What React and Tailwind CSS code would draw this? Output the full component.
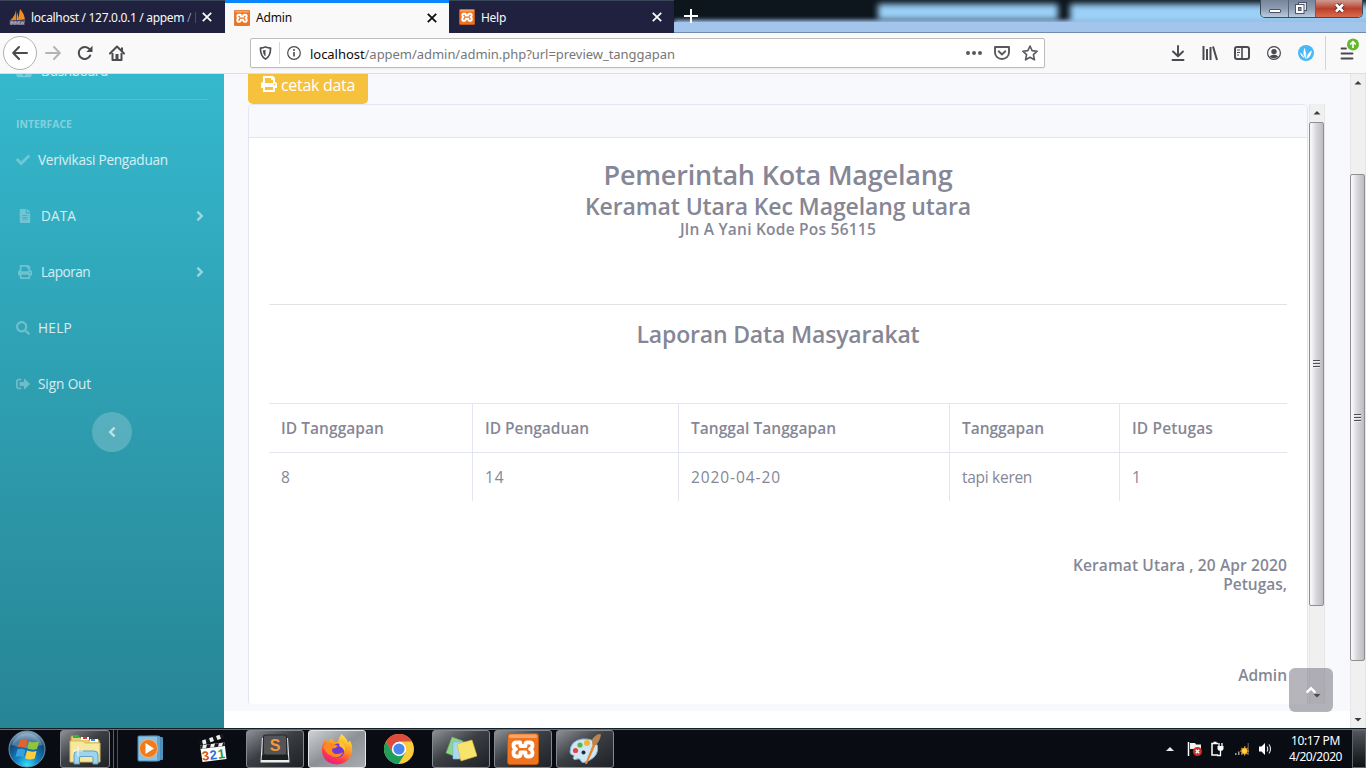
import { FaAngleLeft, FaAngleRight, FaAngleUp, FaCheck, FaFileAlt, FaPrint, FaSearch, FaSignOutAlt, FaTachometerAlt } from "react-icons/fa";

function XamppLogo({ className }) {
  return (
    <svg viewBox="0 0 32 32" className={className}>
      <rect x="0.5" y="0.5" width="31" height="31" rx="2.5" fill="#ee7420" stroke="#b85510" />
      <rect x="2" y="1.5" width="28" height="3.5" rx="1.5" fill="#f7a468" />
      <path
        d="M13 9.5H9.5Q6.5 9.5 6.5 12.2Q6.5 15 9 16Q6.5 17 6.5 19.8Q6.5 23.5 9.5 23.5H11.5Q13.5 23.5 13.5 20.5V19.5H18.5V20.5Q18.5 23.5 20.5 23.5H22.5Q25.5 23.5 25.5 19.8Q25.5 17 23 16Q25.5 15 25.5 12.2Q25.5 9.5 22.5 9.5H20.5Q18.5 9.5 18.5 11.5V13H13.5V11.5Q13.5 9.5 13 9.5Z"
        fill="none"
        stroke="#fff"
        strokeWidth="3.8"
        strokeLinejoin="round"
      />
    </svg>
  );
}

function PmaLogo() {
  return (
    <svg viewBox="0 0 17 16" className="h-4 w-[17px]">
      <path d="M7 0.500Q7 6 1 11.500L7.500 11Z" fill="#e88a1c" />
      <path d="M8 3L8 11L10 11Z" fill="#c9a27a" />
      <path d="M11 0Q10 6 9 11L16 10.500Q15 4 11 0Z" fill="#f08e1e" />
      <path d="M0.500 11.500H16.500L15 16H1Z" fill="#6b6986" />
      <path d="M2 15.500V13H4V15M6 15.500V12.500L8 14.500L10 12.500V15.500M12 15.500L13.500 13L15 15.500" stroke="#c9c7d6" strokeWidth="0.8" fill="none" />
    </svg>
  );
}

function Close({ className }) {
  return (
    <svg viewBox="0 0 10 10" className={className}>
      <path d="M0.800 0.800L9.200 9.200M9.200 0.800L0.800 9.200" stroke="currentColor" strokeWidth="1.800" fill="none" />
    </svg>
  );
}

function TitleBar() {
  return (
    <div className="relative flex h-[33px] shrink-0 overflow-hidden bg-[#0d151d] font-['Noto_Sans',sans-serif] text-[12px]">
      <div className="absolute left-[674px] top-[20px] h-[20px] w-[700px] bg-[#a3c5ec] blur-[2px]" />
      <div className="absolute left-[878px] top-[4px] h-[16px] w-[180px] bg-[#9bd0f7] blur-[3px]" />
      <div className="absolute left-[1070px] top-[4px] h-[20px] w-[320px] bg-[#9bd0f7] blur-[3px]" />
      <div className="absolute left-[674px] top-[22px] h-[10px] w-[692px] bg-[#a3c5ec]" />
      <div className="absolute left-[674px] top-[32px] h-px w-[692px] bg-[#6f8bb0]" />
      <div className="relative flex h-[33px] w-[225px] items-center border-t border-[#38475a] bg-[#20213f] pl-[9px] pr-[13px] text-[#f9f9fa]">
        <PmaLogo />
        <span className="ml-[5px] flex-1 whitespace-nowrap pt-px tracking-[-0.32px]">localhost / 127.0.0.1 / appem <span className="opacity-50">/</span></span>
        <span className="mr-[6px] h-[11px] w-px bg-[#4a4b63]" />
        <Close className="size-[10px]" />
      </div>
      <div className="relative flex h-[33px] w-[224px] items-center border-t-[3px] border-[#0a84ff] bg-[#f9f9fa] pl-[9px] pr-[12px] text-[#0c0c0d]">
        <XamppLogo className="-mt-px size-4" />
        <span className="ml-[6px] flex-1 whitespace-nowrap tracking-[-0.15px]">Admin</span>
        <Close className="size-[10px]" />
      </div>
      <div className="relative flex h-[33px] w-[225px] items-center border-t border-[#38475a] bg-[#20213f] pl-[10px] pr-[12px] text-[#f9f9fa]">
        <XamppLogo className="size-4" />
        <span className="ml-[6px] flex-1 whitespace-nowrap pt-px tracking-[-0.28px]">Help</span>
        <Close className="size-[10px]" />
      </div>
      <svg viewBox="0 0 14 14" className="relative ml-[10px] mt-[9px] size-[14px]">
        <path d="M7 0V14M0 7H14" stroke="#fff" strokeWidth="2" />
      </svg>
      <div className="absolute left-[1260px] top-0 flex h-[18px] w-[103px] overflow-hidden rounded-b-[5px] border border-t-0 border-[#3c4a5e]">
        <div className="flex w-[28px] items-end justify-center border-r border-[#55657c] bg-linear-to-b from-[#76859b] via-[#8e9db2] to-[#bccade] pb-[4px]">
          <div className="h-[4px] w-[12px] rounded-[1px] border border-[#4c5468] bg-white" />
        </div>
        <div className="flex w-[27px] items-center justify-center border-r border-[#55657c] bg-linear-to-b from-[#76859b] via-[#8e9db2] to-[#bccade]">
          <svg viewBox="0 0 12 12" className="-ml-[2px] -mt-px size-[12px]">
            <rect x="3.500" y="0.500" width="8" height="8" fill="#e8ecf2" stroke="#4c5468" />
            <rect x="0.500" y="2.500" width="8.500" height="9" fill="#fff" stroke="#4c5468" />
            <rect x="3.500" y="5.500" width="2.500" height="3" fill="#8b9ab0" stroke="#4c5468" />
          </svg>
        </div>
        <div className="flex flex-1 items-center justify-center bg-linear-to-b from-[#cf9a90] via-[#b7412b] to-[#dd6a4d]">
          <svg viewBox="0 0 13 10" className="-mt-px h-[10px] w-[13px]">
            <path d="M3 1.500L10 8.500M10 1.500L3 8.500" stroke="#53302f" strokeWidth="4.500" />
            <path d="M3 1.500L10 8.500M10 1.500L3 8.500" stroke="#fff" strokeWidth="2.600" />
          </svg>
        </div>
      </div>
    </div>
  );
}

function NavToolbar() {
  return (
    <div className="flex h-[41px] shrink-0 items-center border-b border-[#dedee0] bg-[#f9f9fa] text-[#4a4a4f]">
      <div className="ml-[3px] flex size-[34px] items-center justify-center rounded-full border border-[#b1b1b3] bg-white">
        <svg viewBox="0 0 16 16" className="size-4" fill="none" stroke="currentColor" strokeWidth="2" strokeLinecap="round" strokeLinejoin="round">
          <path d="M15 8H1.500M7 2L1.200 8L7 14" />
        </svg>
      </div>
      <svg viewBox="0 0 16 16" className="ml-[8px] size-4 text-[#b4b4b6]" fill="none" stroke="currentColor" strokeWidth="2" strokeLinecap="round" strokeLinejoin="round">
        <path d="M1 8H14.500M9 2L14.800 8L9 14" />
      </svg>
      <svg viewBox="0 0 16 16" className="ml-[16px] size-4" fill="none" stroke="currentColor" strokeWidth="2">
        <path d="M13.200 10.500A6 6 0 1 1 12.500 4.200" strokeLinecap="round" />
        <path d="M15.500 0.800V7H9.300Z" fill="currentColor" stroke="none" />
      </svg>
      <svg viewBox="0 0 16 16" className="ml-[16px] size-4">
        <path d="M1 8.500L8 1.500L15 8.500" fill="none" stroke="currentColor" strokeWidth="2" strokeLinecap="round" strokeLinejoin="round" />
        <path d="M12 2.500H14V6.500L12 4.500Z" fill="currentColor" />
        <path d="M3.500 8V15H12.500V8" fill="none" stroke="currentColor" strokeWidth="2" strokeLinejoin="round" />
        <rect x="6.500" y="9" width="3" height="6" fill="currentColor" />
      </svg>
      <div className="ml-[125px] flex h-[30px] w-[795px] items-center rounded-[2px] border border-[#bdbdbf] bg-white shadow-[0_1px_2px_rgba(0,0,0,0.06)]">
        <svg viewBox="0 0 14 16" className="ml-[8px] h-[14px] w-[13px]" fill="none">
          <path d="M7 1C5 2 3 2.400 1.200 2.400C1.200 8 2 12.500 7 15C12 12.500 12.800 8 12.800 2.400C11 2.400 9 2 7 1Z" stroke="currentColor" strokeWidth="1.900" strokeLinejoin="round" />
          <path d="M7 4.200V12C4.600 10.300 4.200 7.500 4.100 4.900C5.200 4.800 6.100 4.600 7 4.200Z" fill="currentColor" />
        </svg>
        <div className="ml-[7px] h-[22px] w-px bg-[#d7d7db]" />
        <svg viewBox="0 0 14 14" className="ml-[7px] size-[14px]">
          <circle cx="7" cy="7" r="6.300" fill="none" stroke="currentColor" strokeWidth="1.200" />
          <path d="M7 6V10.500" stroke="currentColor" strokeWidth="1.600" />
          <circle cx="7" cy="3.900" r="1" fill="currentColor" />
        </svg>
        <div className="ml-[9px] flex-1 whitespace-nowrap pt-[3px] font-['Noto_Sans',sans-serif] text-[13px] tracking-[-0.04px] text-[#77777a]">
          <span className="text-[#0c0c0d]">localhost</span>/appem/admin/admin.php?url=preview_tanggapan
        </div>
        <svg viewBox="0 0 16 4" className="h-[4px] w-[16px]" fill="#5a5a5e">
          <circle cx="2" cy="2" r="2" /><circle cx="8" cy="2" r="2" /><circle cx="14" cy="2" r="2" />
        </svg>
        <svg viewBox="0 0 16 16" className="ml-[12px] size-4" fill="none" stroke="#5a5a5e" strokeWidth="1.900" strokeLinecap="round" strokeLinejoin="round">
          <path d="M1 2H15V7.500A7 6.500 0 0 1 1 7.500ZM4.700 6.300L8 9.500L11.300 6.300" />
        </svg>
        <svg viewBox="0 0 16 16" className="ml-[12px] mr-[6px] size-4" fill="none" stroke="#5a5a5e" strokeWidth="1.600" strokeLinejoin="round">
          <path d="M8 1L10.100 5.600L15.200 6.200L11.400 9.600L12.500 14.800L8 12.200L3.500 14.800L4.600 9.600L0.800 6.200L5.900 5.600Z" />
        </svg>
      </div>
      <svg viewBox="0 0 14 16" className="ml-[126px] h-4 w-[14px]" fill="none" stroke="currentColor" strokeWidth="1.900" strokeLinecap="round" strokeLinejoin="round">
        <path d="M7 1V11M2 6.500L7 11.300L12 6.500M1.500 15H12.500" />
      </svg>
      <svg viewBox="0 0 16 16" className="ml-[17px] size-4" fill="none" stroke="currentColor" strokeWidth="2">
        <path d="M1.500 1V15M5 4V15M8.500 2V15M11 1.500L15 15" />
      </svg>
      <svg viewBox="0 0 16 14" className="ml-[16px] h-[14px] w-4" fill="none" stroke="currentColor">
        <rect x="1" y="1" width="14" height="12" rx="2" strokeWidth="2" />
        <path d="M8 1V13" strokeWidth="1.600" />
        <path d="M3 4H6M3 6.500H6M3 9H5" strokeWidth="1" />
      </svg>
      <svg viewBox="0 0 14 14" className="ml-[17px] size-[14px]">
        <circle cx="7" cy="7" r="6.400" fill="none" stroke="currentColor" strokeWidth="1.200" />
        <circle cx="7" cy="5.600" r="2.700" fill="currentColor" />
        <path d="M2.800 10.500Q4.500 8.400 7 8.800Q9.500 8.400 11.200 10.500Q9.500 12.300 7 12.300Q4.500 12.300 2.800 10.500Z" fill="currentColor" />
      </svg>
      <svg viewBox="0 0 16 16" className="ml-[17px] size-4">
        <circle cx="8" cy="8" r="8" fill="#48b9f5" />
        <path d="M2.500 8Q5 9.500 5.800 12.500Q3.500 11.500 2.500 8ZM6.500 3.500Q8.500 8 7.600 13.500Q4.500 9 6.500 3.500ZM13.500 6Q13 11.500 8.800 13.500Q9 9 13.500 6Z" fill="#fff" stroke="#fff" strokeWidth="0.600" />
      </svg>
      <div className="ml-[11px] h-[34px] w-px bg-[#d4d4d7]" />
      <svg viewBox="0 0 20 24" className="ml-[14px] mt-[-8px] h-[24px] w-[20px]">
        <path d="M1.500 11.500H6M1.500 16.500H12.500M1.500 21.500H12.500" stroke="#4a4a4f" strokeWidth="1.800" strokeLinecap="round" />
        <circle cx="13" cy="7.500" r="6" fill="#65b82e" />
        <path d="M13 11V5M10.200 7.500L13 4.700L15.800 7.500" stroke="#fff" strokeWidth="1.600" fill="none" />
      </svg>
    </div>
  );
}

function ScrollArrow({ up }) {
  return (
    <svg viewBox="0 0 16 17" className="block h-[17px] w-4 shrink-0">
      <path d={up ? "M4.500 10.500L8 7L11.500 10.500Z" : "M4.500 7L8 10.500L11.500 7Z"} fill="#3c3c3f" />
    </svg>
  );
}

function Scrollbar({ before, thumb }) {
  return (
    <div className="flex h-full w-4 shrink-0 flex-col border-x border-[#e6e6e8] bg-[#f0f0f0]">
      <div className="-mx-px"><ScrollArrow up /></div>
      <div className={before} />
      <div className={"-ml-px flex flex-col items-center justify-center gap-px rounded-[2px] border border-[#8f8f92] bg-linear-to-r from-[#f6f6f7] from-10% via-[#d6d6da] via-50% to-[#bcbcc3] pr-px " + thumb}>
        {[0, 1, 2].map((i) => (
          <div key={i} className="h-[2px] w-[7px] border-t border-[#4d4d52] bg-[#ececee]" />
        ))}
      </div>
      <div className="flex-1" />
      <div className="-mx-px"><ScrollArrow /></div>
    </div>
  );
}

const links = [
  { icon: FaCheck, label: "Verivikasi Pengaduan", text: "ml-[8px] tracking-[-0.24px]", row: "" },
  { icon: FaFileAlt, label: "DATA", text: "ml-[9px] tracking-[0.1px]", row: "pl-[2px]", more: true },
  { icon: FaPrint, label: "Laporan", text: "ml-[9px] tracking-[-0.5px]", row: "pl-[2px]", more: true },
  { icon: FaSearch, label: "HELP", text: "ml-[8px] tracking-[0.28px]", row: "" },
  { icon: FaSignOutAlt, label: "Sign Out", text: "ml-[8px] tracking-[-0.1px]", row: "" },
];

function Sidebar() {
  return (
    <div className="flex w-[224px] shrink-0 flex-col overflow-hidden bg-linear-to-b from-[#35b8cd] to-[#278595] px-4 text-[13.6px] text-white/80">
      <div className="flex h-[26px] shrink-0 items-start border-b border-white/15">
        <div className="-mt-[13px] flex h-5 items-center">
          <FaTachometerAlt className="size-[16px] text-white/30" />
          <span className="ml-[9px] tracking-[-0.35px]">Dashboard</span>
        </div>
      </div>
      <div className="mt-[16px] h-4 text-[10.4px] font-bold leading-4 text-white/40">INTERFACE</div>
      <div className="flex flex-col">
        {links.map(({ icon: Icon, label, text, row, more }) => (
          <div key={label} className={"flex h-[56px] items-center " + row}>
            <Icon className="size-[14px] text-white/30" />
            <span className={text}>{label}</span>
            {more && <FaAngleRight className="ml-auto size-4 text-white/50" />}
          </div>
        ))}
      </div>
      <div className="mx-auto flex size-10 shrink-0 items-center justify-center rounded-full bg-white/20 pr-px">
        <FaAngleLeft className="size-4 text-white/60" />
      </div>
    </div>
  );
}

const columns = [
  { head: "ID Tanggapan", value: "8", size: "w-[204px] border-r", headText: "tracking-[0.05px]", valueText: "" },
  { head: "ID Pengaduan", value: "14", size: "w-[206px] border-r", headText: "tracking-[-0.03px]", valueText: "tracking-[0.8px]" },
  { head: "Tanggal Tanggapan", value: "2020-04-20", size: "w-[271px] border-r", headText: "tracking-[0.04px]", valueText: "tracking-[0.91px]" },
  { head: "Tanggapan", value: "tapi keren", size: "w-[170px] border-r", headText: "tracking-[-0.03px]", valueText: "tracking-[-0.29px]" },
  { head: "ID Petugas", value: "1", size: "w-[167px]", headText: "tracking-[0.13px]", valueText: "" },
];

function Report() {
  return (
    <div className="flex w-[1060px] flex-col rounded-t-[5px] rounded-bl-[3px] border border-b-0 border-[#e3e6f0] bg-white text-[15.5px] text-[#858796]">
      <div className="h-[33px] shrink-0 rounded-t-[5px] border-b border-[#e3e6f0] bg-[#f8f9fc]" />
      <div className="flex flex-col px-5 pt-5">
        <div className="flex flex-col items-center font-semibold">
          <h3 className="h-[34px] text-[27px] leading-[33px] tracking-[-0.2px]">Pemerintah Kota Magelang</h3>
          <h4 className="h-[28px] text-[23px] leading-[28px] tracking-[-0.11px]">Keramat Utara Kec Magelang utara</h4>
          <p className="h-[20px] leading-[19px] tracking-[0.23px]">Jln A Yani Kode Pos 56115</p>
        </div>
        <div className="mt-[64px] h-px bg-[#e2e2e6]" />
        <h4 className="mt-[15px] mb-px text-center text-[23px] font-semibold leading-[29px] tracking-[-0.17px]">Laporan Data Masyarakat</h4>
        <div className="mt-[53px] flex">
          {columns.map((c) => (
            <div key={c.head} className={"border-[#e3e6f0] " + c.size}>
              <div className={"h-[49px] border-t border-[#e3e6f0] px-3 font-semibold leading-[48px] " + c.headText}>{c.head}</div>
              <div className={"h-[49px] border-t border-[#e3e6f0] px-3 leading-[48px] " + c.valueText}>{c.value}</div>
            </div>
          ))}
        </div>
        <div className="mt-[55px] text-right font-semibold">
          <p className="leading-[19px] tracking-[0.12px]">Keramat Utara , 20 Apr 2020</p>
          <p className="leading-[19px]">Petugas,</p>
          <p className="mt-[72px] leading-[19px]">Admin</p>
        </div>
      </div>
    </div>
  );
}

function Main() {
  return (
    <div className="relative flex flex-1 flex-col bg-white">
      <div className="flex h-[637px] shrink-0 flex-col bg-[#f8f9fc] pl-6">
        <div className="flex h-[30px] w-[120px] items-start rounded-b-[5px] bg-[#f6c23e] pl-[13px] text-[16px] text-white">
          <FaPrint className="mt-[2px] size-4" />
          <span className="ml-[4px] h-[22px] leading-[22px] tracking-[-0.3px]">cetak data</span>
        </div>
        <div className="flex h-[600px] w-[1077px]">
          <Report />
          <div className="w-px" />
          <Scrollbar before="h-px" thumb="h-[484px]" />
        </div>
      </div>
      <div className="absolute left-[1065px] top-[594px] flex size-[44px] items-center justify-center rounded-[6px] bg-[#5a5c69]/45 text-white">
        <FaAngleUp className="size-4" />
      </div>
    </div>
  );
}

function TaskButton({ active, className, children }) {
  return (
    <div className={"flex h-[38px] items-center justify-center rounded-[3px] border " + (active ? "border-[#e4e6e8] bg-linear-to-br from-[#cfd1d4] via-[#8d9195] to-[#a9acae] " : "border-[#84898f] bg-linear-to-br from-[#8d9094] via-[#3b3f44] via-45% to-[#1e2226] ") + className}>
      {children}
    </div>
  );
}

function StartOrb() {
  return (
    <svg viewBox="0 0 38 38" className="ml-[8px] size-[38px]">
      <defs>
        <radialGradient id="orb" cx="0.500" cy="0.950" r="0.900">
          <stop offset="0" stopColor="#33e1ff" />
          <stop offset="0.350" stopColor="#1283c4" />
          <stop offset="0.750" stopColor="#134a7c" />
          <stop offset="1" stopColor="#7fa3bb" />
        </radialGradient>
      </defs>
      <circle cx="19" cy="19" r="18" fill="url(#orb)" stroke="#6e92a8" />
      <path d="M4 15A15.500 15.500 0 0 1 34 15Q19 21 4 15Z" fill="#fff" opacity="0.250" />
      <path d="M12 10.500Q15.500 8.500 19.500 10.500L17.800 18Q14 16 9.800 17.500Z" fill="#e8602a" />
      <path d="M21 11.200Q25 13.200 31 11.500L29 19Q24 20.500 19.300 18.500Z" fill="#8cc63e" />
      <path d="M9.300 19.500Q13.500 18 17.300 20L15.500 27.500Q11.500 25.500 7.500 27Z" fill="#39a0e0" />
      <path d="M19 20.500Q23.500 22.500 28.500 21L26.800 28.500Q21.500 30.500 17 28.200Z" fill="#fbcf3b" />
    </svg>
  );
}

function ExplorerIcon() {
  return (
    <svg viewBox="0 0 34 32" className="h-8 w-[34px]">
      <path d="M3 6V3H10L12 5H20V7H31V28H3Z" fill="#e9cf72" stroke="#b99a3f" />
      <rect x="5" y="2" width="6" height="3" fill="#36b24a" />
      <rect x="13" y="4" width="8" height="3" fill="#fff" /><rect x="15" y="4" width="4" height="2" fill="#d8382c" />
      <rect x="22" y="6" width="8" height="3" fill="#fff" /><rect x="23" y="6" width="4" height="2" fill="#3b8de0" />
      <path d="M2 8H15L17 10H32V29H2Z" fill="#f7e8a0" stroke="#d5b95c" />
      <path d="M6 31V22Q6 18 10 18H26Q30 18 30 22V31H25V25Q25 23.500 23.500 23.500H13Q11.500 23.500 11.500 25V31Z" fill="#9fd4ee" stroke="#5f9fc4" />
      <path d="M10 13V23M5 18H15" stroke="#fff" strokeWidth="0.900" />
    </svg>
  );
}

function MediaIcon() {
  return (
    <svg viewBox="0 0 27 27" className="size-[27px]">
      <rect x="12" y="2" width="14" height="23" rx="1" fill="#4f93bd" />
      <rect x="10" y="1" width="13" height="25" rx="1" fill="#7ab8d8" stroke="#3f7fa8" strokeWidth="0.600" />
      <rect x="1" y="1" width="20" height="25" rx="1" fill="#8cc3e0" stroke="#4a8bb3" />
      <circle cx="11.500" cy="13.500" r="9" fill="#f07a1c" stroke="#f9b274" />
      <path d="M8.500 8L17 13.500L8.500 19Z" fill="#fff" />
    </svg>
  );
}

function ClapperIcon() {
  return (
    <svg viewBox="0 0 30 30" className="size-[30px]">
      <path d="M1 8.500L25 0.500L26.500 4.500L2.500 12.500Z" fill="#16181b" />
      <path d="M4 7.500L7.500 6.300L8.500 10.500L5 11.700ZM11 5.200L14.500 4L16 8L12.500 9.200ZM18 2.900L21.500 1.700L23 5.700L19.500 6.900Z" fill="#f0f0f0" />
      <path d="M2 12.500L26.500 9.500L28.500 26L4.500 29Z" fill="#fff" />
      <path d="M2 12.500L26.500 9.500L27 13L2.500 16Z" fill="#1b1c1f" />
      <path d="M5 12.100L9 11.600L8 15.300L4 15.800ZM13 11.100L17 10.600L16 14.300L12 14.800ZM21 10.200L25 9.700L24 13.300L20 13.800Z" fill="#f0f0f0" />
      <g fontFamily="Liberation Sans" fontWeight="bold" fontSize="13" transform="rotate(-7 15 24)">
        <text x="4" y="26.500" fill="#d4531d">3</text><text x="12" y="26.500" fill="#2b6fd4">2</text><text x="20" y="26.500" fill="#2a9a3a">1</text>
      </g>
    </svg>
  );
}

function SublimeIcon() {
  return (
    <svg viewBox="0 0 32 30" className="h-[30px] w-8">
      <path d="M3 4H29L30.500 28.500H1.500Z" fill="#eceded" />
      <path d="M4 2Q4 1 5 1H27Q28 1 28 2L29 25H3Z" fill="#303234" />
      <rect x="4.500" y="1" width="23" height="20" rx="2" fill="#525457" stroke="#252729" />
      <path d="M3 21H29L29.500 26H2.500Z" fill="#1d1e20" />
      <text x="16" y="17" textAnchor="middle" fontFamily="Liberation Sans" fontWeight="bold" fontSize="16" fill="#f6983a">S</text>
    </svg>
  );
}

function FirefoxIcon() {
  return (
    <svg viewBox="0 0 32 32" className="size-8">
      <defs>
        <linearGradient id="fox" x1="0.800" y1="0" x2="0.300" y2="1">
          <stop offset="0" stopColor="#fff04a" /><stop offset="0.450" stopColor="#ff9420" /><stop offset="0.750" stopColor="#ff3a4c" /><stop offset="1" stopColor="#e8198b" />
        </linearGradient>
      </defs>
      <path d="M20.500 1Q26 5.500 27 9.500L29 7.500Q32 13 31 19Q28 31 16 31.500Q3 31 1 19Q0.500 11 4.500 5.500Q5 8 6.500 9Q9 5.500 11.500 5.500Q11.500 8 13 9H17Q18 4 20.500 1Z" fill="url(#fox)" />
      <circle cx="16.500" cy="17.500" r="7" fill="#7138d8" />
      <path d="M2 14Q7 8 13 11L17 13Q15 15.500 11.500 15.500Q10 18 13 20.500Q18 22 22 19Q20 25 14 24Q6 23 2 14Z" fill="#ff8a1e" />
      <path d="M18 8Q26 12 23.500 19Q22 14 18.500 13.500Z" fill="#ffc52e" />
    </svg>
  );
}

function ChromeIcon() {
  return (
    <svg viewBox="0 0 30 30" className="size-[30px]">
      <circle cx="15" cy="15" r="15" fill="#fbcd3c" />
      <path d="M2 7.500A15 15 0 0 0 14.500 30L21.500 18.500L15 15L8.500 18.500Z" fill="#1d9e5b" />
      <path d="M2 7.500A15 15 0 0 1 28 7.500H15L8.500 18.500Z" fill="#dd4b3e" />
      <circle cx="15" cy="15" r="7.200" fill="#fff" />
      <circle cx="15" cy="15" r="5.600" fill="#4a86ee" />
    </svg>
  );
}

function NotesIcon() {
  return (
    <svg viewBox="0 0 32 26" className="h-[26px] w-8">
      <path d="M7 1L18 5L12 21L1 17Z" fill="#8fd48a" stroke="#6aae66" strokeWidth="0.600" />
      <path d="M8 6H20V23H8Z" fill="#a9d8f5" stroke="#7ab1d3" strokeWidth="0.600" />
      <path d="M12 8L27 4L32 20L16 25Z" fill="#f8e36c" stroke="#d5b83c" strokeWidth="0.600" />
    </svg>
  );
}

function PaintIcon() {
  return (
    <svg viewBox="0 0 32 32" className="size-8">
      <path d="M1 19Q1 8 13 6Q26 5 28.500 13Q30 22 21 27Q13 31.500 12 28Q11 25 8 26Q5 28 4 25Q6 22 3.500 22Q1.500 22 1 19Z" fill="#cfe6f5" stroke="#7fb0d0" />
      <circle cx="6.500" cy="17.500" r="2.600" fill="#e2473f" /><circle cx="11" cy="12" r="2.600" fill="#58b847" /><circle cx="18" cy="10" r="3" fill="#f4b62e" />
      <circle cx="14.500" cy="19.500" r="2" fill="#1b2c3c" />
      <path d="M24 11L26.500 12L18 31L16 31Z" fill="#e8862e" />
      <path d="M23.500 12Q22 6 25 4Q29 0 32 1.500Q31 8 27 12Z" fill="#b98352" />
    </svg>
  );
}

function Tray() {
  return (
    <div className="ml-auto flex h-full items-center">
      <svg viewBox="0 0 8 4" className="h-1 w-2"><path d="M0 4L4 0L8 4Z" fill="#e9ebee" /></svg>
      <svg viewBox="0 0 16 16" className="ml-[13px] size-4">
        <path d="M1.500 1V15" stroke="#fff" strokeWidth="1.500" /><path d="M3 2H8L9 3.500H14V9H8L7 8H3Z" fill="#f2f2f2" />
        <circle cx="10.500" cy="10.500" r="4.500" fill="#d12d25" /><path d="M8.800 8.800L12.200 12.200M12.200 8.800L8.800 12.200" stroke="#fff" strokeWidth="1.400" />
      </svg>
      <svg viewBox="0 0 14 16" className="ml-[7px] h-4 w-[14px]" fill="none" stroke="#fff">
        <path d="M8 2.500H2V14H8" strokeWidth="1.500" /><path d="M3.500 1.500H6.500" strokeWidth="1.500" />
        <path d="M9 2V5M12 2V5" strokeWidth="1.300" /><path d="M7.500 5H13.500V8Q13 10 10.500 10Q8 10 7.500 8Z" fill="#fff" stroke="none" /><path d="M10.500 10V14.500H7" strokeWidth="1.300" />
      </svg>
      <svg viewBox="0 0 16 14" className="ml-[10px] h-[14px] w-4">
        <path d="M1 11H2.500V13H1ZM4 9.500H5.500V13H4Z" fill="#9a9da1" /><path d="M7 7H9V13H7ZM10.500 4H12V13H10.500ZM13.500 1H15V13H13.500Z" fill="#4c4f53" />
        <circle cx="10.500" cy="9" r="3" fill="#f7b61e" /><path d="M10.500 4.500V13.500M6 9H15M7.300 5.800L13.700 12.200M13.700 5.800L7.300 12.200" stroke="#f09a14" strokeWidth="1.100" /><circle cx="10.500" cy="9" r="2.400" fill="#fcd34a" />
      </svg>
      <svg viewBox="0 0 14 14" className="ml-[8px] size-[14px]">
        <path d="M1 4.500H3.500L7 1V13L3.500 9.500H1Z" fill="#fff" /><path d="M9 4.500Q10.500 7 9 9.500M11 2.500Q14 7 11 11.500" stroke="#e4e4e4" strokeWidth="1.100" fill="none" />
      </svg>
      <div className="ml-[16px] w-[55px] whitespace-nowrap text-center font-['Noto_Sans',sans-serif] text-[12px] leading-[16px] text-white">
        <p className="tracking-[-0.36px]">10:17 PM</p>
        <p className="tracking-[-0.44px]">4/20/2020</p>
      </div>
      <div className="ml-[9px] h-[38px] w-[14px] border border-[#5d6369] bg-linear-to-b from-[#51565b] to-[#0e1215]" />
    </div>
  );
}

function Taskbar() {
  return (
    <div className="flex h-[40px] shrink-0 items-center border-t border-[#15202b] bg-[#090d13] shadow-[inset_0_1px_0_#5d6f7e]">
      <StartOrb />
      <TaskButton className="ml-[14px] w-[50px]"><ExplorerIcon /></TaskButton>
      <div className="ml-[2px] h-[38px] w-[2px] border-r border-[#5a5f65]" />
      <div className="ml-[1px] h-[38px] w-[3px] border-r border-[#4a4f55]" />
      <div className="ml-[19px]"><MediaIcon /></div>
      <div className="-mt-[2px] ml-[34px]"><ClapperIcon /></div>
      <TaskButton className="ml-[18px] w-[58px]"><SublimeIcon /></TaskButton>
      <TaskButton active className="ml-[4px] w-[58px]"><FirefoxIcon /></TaskButton>
      <div className="ml-[18px]"><ChromeIcon /></div>
      <TaskButton className="ml-[18px] w-[58px]"><NotesIcon /></TaskButton>
      <TaskButton className="ml-[4px] w-[58px]"><XamppLogo className="size-8" /></TaskButton>
      <TaskButton className="ml-[4px] w-[58px]"><PaintIcon /></TaskButton>
      <Tray />
    </div>
  );
}

export default function App() {
  return (
    <div className="flex h-[768px] w-[1366px] flex-col overflow-hidden bg-white font-['Open_Sans','Noto_Sans',sans-serif]">
      <TitleBar />
      <NavToolbar />
      <div className="flex min-h-0 flex-1">
        <Sidebar />
        <Main />
        <Scrollbar before="h-[83px]" thumb="h-[487px]" />
      </div>
      <Taskbar />
    </div>
  );
}
